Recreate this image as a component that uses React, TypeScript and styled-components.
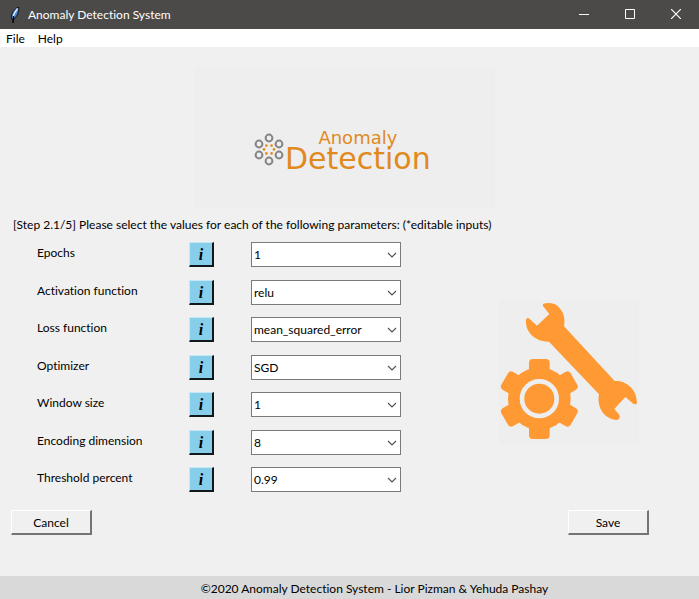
import React from "react";
import styled, { createGlobalStyle } from "styled-components";

const GlobalStyle = createGlobalStyle`
  *, *::before, *::after { box-sizing: border-box; }
  body { margin: 0; background: #f0f0f0; font-variant-ligatures: none; }
  body, button, select { font-family: Lato, "Noto Sans", sans-serif; font-size: 12px; line-height: 16px; color: #000; }
`;

const Window = styled.div`
  min-height: 100vh;
  display: flex;
  flex-direction: column;
  background: #f0f0f0;
`;

const TitleBar = styled.header`
  display: flex;
  align-items: center;
  height: 29px;
  padding-left: 8px;
  background: #4c4a48;
  color: #fff;
`;

const Title = styled.h1`
  flex: 1;
  margin: 0 0 0 6px;
  font-size: 12px;
  line-height: 16px;
  font-weight: 400;
`;

const CaptionButton = styled.button`
  display: grid;
  place-items: center;
  width: 46px;
  height: 29px;
  padding: 0 0 2px;
  border: 0;
  background: transparent;
`;

const MenuBar = styled.nav`
  display: flex;
  gap: 13px;
  height: 18px;
  padding: 0 6px;
  background: #fff;
`;

const MenuItem = styled.button`
  padding: 0;
  border: 0;
  background: transparent;
  line-height: 20px;
`;

const Main = styled.main`
  flex: 1;
  display: flex;
  flex-direction: column;
  padding: 20px 50px 0 11px;
`;

const Banner = styled.div`
  align-self: center;
  display: flex;
  width: 300px;
  height: 142px;
  margin-left: 30px;
  padding: 62px 0 0 59px;
  background: #eee;
`;

const Emblem = styled.svg`
  flex: none;
  margin-top: 4px;
`;

const Wordmark = styled.div`
  display: flex;
  flex-direction: column;
  align-items: center;
  color: #e08a1e;
  font-family: "DejaVu Sans", sans-serif;
`;

const WordTop = styled.span`
  font-size: 18px;
  line-height: 18px;
`;

const WordBottom = styled.span`
  font-size: 30px;
  line-height: 24px;
`;

const Prompt = styled.p`
  margin: 8px 0 9px 2px;
`;

const Body = styled.div`
  display: flex;
  justify-content: space-between;
  padding: 0 10px 0 26px;
`;

const Fields = styled.div`
  display: flex;
  flex-direction: column;
`;

const Row = styled.div`
  display: grid;
  grid-template-columns: 152px 62px 150px;
  height: 25px;
  margin-bottom: 12px;
  &:nth-child(odd) { margin-bottom: 13px; }
  &:last-child { margin-bottom: 0; }
`;

const Label = styled.label`
  line-height: 22px;
`;

const InfoButton = styled.button`
  width: 25px;
  height: 25px;
  padding: 1px 0 0;
  border: solid;
  border-width: 1px 2px 2px 1px;
  border-color: #c5e8f5 #10181c #10181c #c5e8f5;
  background: #87ceeb;
  font: italic bold 16px/20px "Liberation Serif", serif;
`;

const Combo = styled.div`
  display: grid;
  align-items: center;
  & > * { grid-area: 1 / 1; }
`;

const Select = styled.select`
  appearance: none;
  width: 100%;
  height: 25px;
  padding: 0 20px 0 2px;
  border: 1px solid #7a7a7a;
  border-radius: 0;
  background: #fff;
`;

const Chevron = styled.svg`
  justify-self: end;
  margin-right: 4px;
  pointer-events: none;
`;

const Illustration = styled.div`
  width: 140px;
  height: 144px;
  margin-top: 58px;
  background: #eee;
`;

const Actions = styled.div`
  display: flex;
  justify-content: space-between;
  margin-top: 18px;
`;

const ActionButton = styled.button`
  width: 81px;
  height: 25px;
  padding: 1px 0 0;
  border: solid;
  border-width: 1px 2px 2px 1px;
  border-color: #fff #747474 #747474 #fff;
  background: #f0f0f0;
`;

const Footer = styled.footer`
  height: 23px;
  padding-left: 50px;
  background: #d9d9d9;
  text-align: center;
  line-height: 26px;
`;

const fields = [
  { id: "epochs", label: "Epochs", options: ["1", "5", "10"] },
  { id: "activation", label: "Activation function", options: ["relu", "sigmoid", "tanh"] },
  { id: "loss", label: "Loss function", options: ["mean_squared_error", "mean_absolute_error"] },
  { id: "optimizer", label: "Optimizer", options: ["SGD", "Adam", "RMSprop"] },
  { id: "window", label: "Window size", options: ["1", "2", "4"] },
  { id: "encoding", label: "Encoding dimension", options: ["8", "16", "32"] },
  { id: "threshold", label: "Threshold percent", options: ["0.99", "0.95", "0.9"] },
];

const outerNodes = [[15, 5], [25, 11], [25, 22], [15, 28], [5, 22], [5, 11]];
const innerNodes = [[12.4, 12.6], [17.6, 12.6], [20, 16.4], [17.6, 20.4], [12.4, 20.4], [10, 16.4]];

function Feather() {
  return (
    <svg width="14" height="18" viewBox="0 0 14 18" aria-hidden="true">
      <path d="M5 15 3.500 12C3 8 6 3 10.500 1c1 4-1 9-4.500 12Z" fill="#4f86cf" stroke="#0d141f" />
      <path d="M5 11.500C5.500 8 7.500 5 9.500 2.500" stroke="#d8ecff" strokeWidth="1.300" fill="none" />
      <path d="m5.500 10-.5 7" stroke="#05080c" strokeWidth="1.500" />
    </svg>
  );
}

function ToolsDrawing() {
  return (
    <svg width="140" height="144" viewBox="27 30 420 432" fill="#ff9933" role="img" aria-label="Settings">
      <path d="M160 41Q176 36 193 42C216 53 228 80 222 109L374 273C402 270 440 292 441 338C440 344 432 344 428 340L406 321L373 357L388 374Q392 387 380 390C345 388 319 355 327 313L177 155C140 156 105 130 108 90C110 83 115 83 119 87L141 107L178 72L159 48Q157 43 160 41Z" />
      <circle cx="148" cy="326" r="94" />
      {[0, 60, 120].map((angle) => (
        <rect key={angle} x="117" y="207" width="62" height="240" rx="12" transform={`rotate(${angle} 148 327)`} />
      ))}
      <circle cx="148" cy="326" r="52" stroke="#eee" strokeWidth="14" />
    </svg>
  );
}

export default function App() {
  return (
    <>
      <GlobalStyle />
      <Window>
        <TitleBar>
          <Feather />
          <Title>Anomaly Detection System</Title>
          <CaptionButton aria-label="Minimize">
            <svg width="10" height="10" stroke="#fff"><path d="M0 5.5h10" /></svg>
          </CaptionButton>
          <CaptionButton aria-label="Maximize">
            <svg width="10" height="10" stroke="#fff" fill="none"><path d="M.5.5h9v9h-9z" /></svg>
          </CaptionButton>
          <CaptionButton aria-label="Close">
            <svg width="10" height="10" stroke="#fff" strokeWidth="1.2"><path d="m0 0 10 10M10 0 0 10" /></svg>
          </CaptionButton>
        </TitleBar>
        <MenuBar>
          <MenuItem>File</MenuItem>
          <MenuItem>Help</MenuItem>
        </MenuBar>
        <Main>
          <Banner>
            <Emblem width="31" height="34" aria-hidden="true">
              {outerNodes.map(([x, y]) => (
                <circle key={`${x}-${y}`} cx={x} cy={y} r="3.4" fill="none" stroke="#858585" strokeWidth="2" />
              ))}
              {innerNodes.map(([x, y]) => (
                <circle key={`${x}-${y}`} cx={x} cy={y} r="1.3" fill="#e08a1e" />
              ))}
            </Emblem>
            <Wordmark>
              <WordTop>Anomaly</WordTop>
              <WordBottom>Detection</WordBottom>
            </Wordmark>
          </Banner>
          <Prompt>[Step 2.1/5] Please select the values for each of the following parameters: (*editable inputs)</Prompt>
          <Body>
            <Fields>
              {fields.map(({ id, label, options }) => (
                <Row key={id}>
                  <Label htmlFor={id}>{label}</Label>
                  <InfoButton aria-label={`About ${label}`}>i</InfoButton>
                  <Combo>
                    <Select id={id} defaultValue={options[0]}>
                      {options.map((option) => (
                        <option key={option}>{option}</option>
                      ))}
                    </Select>
                    <Chevron width="10" height="6" fill="none" stroke="#555" strokeWidth="1.2" aria-hidden="true">
                      <path d="m1 1 4 4 4-4" />
                    </Chevron>
                  </Combo>
                </Row>
              ))}
            </Fields>
            <Illustration>
              <ToolsDrawing />
            </Illustration>
          </Body>
          <Actions>
            <ActionButton>Cancel</ActionButton>
            <ActionButton>Save</ActionButton>
          </Actions>
        </Main>
        <Footer>©2020 Anomaly Detection System - Lior Pizman &amp; Yehuda Pashay</Footer>
      </Window>
    </>
  );
}
